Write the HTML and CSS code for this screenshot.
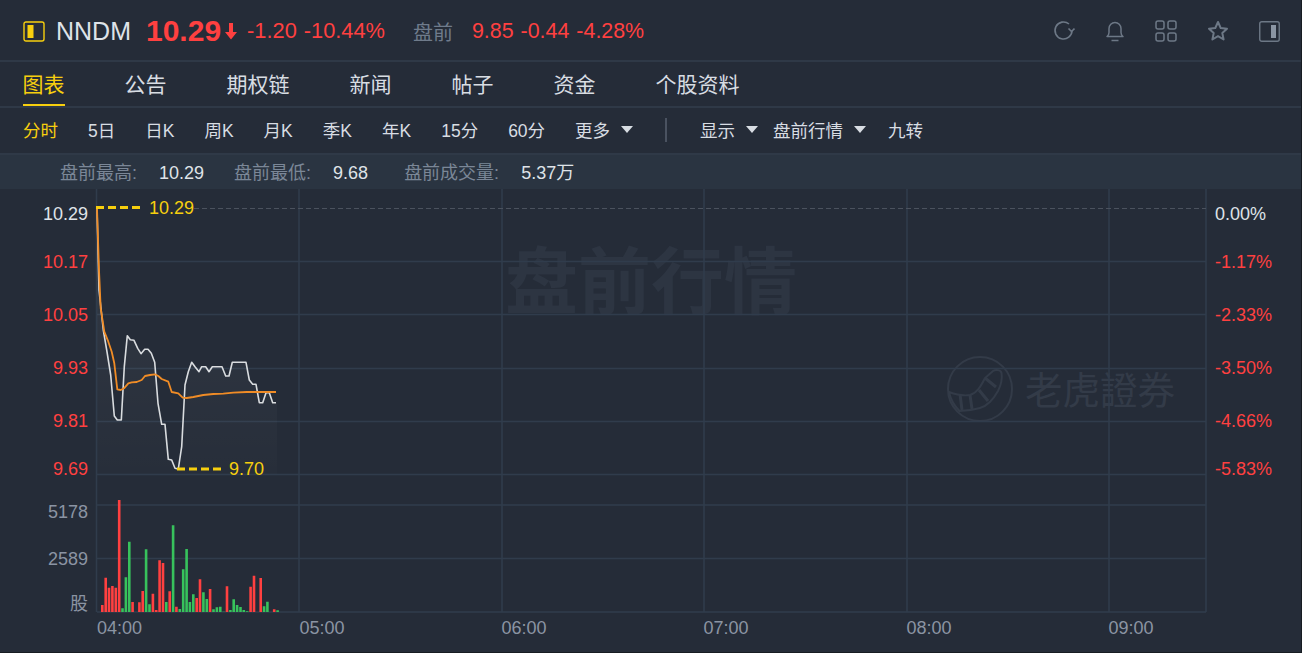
FILE: index.html
```html
<!DOCTYPE html>
<html lang="zh">
<head>
<meta charset="utf-8">
<title>NNDM</title>
<link rel="stylesheet" href="styles.css">
</head>
<body>
<div class="app">
  <header class="quote">
    <div class="quote-left">
      <svg class="mark" width="22" height="21" viewBox="0 0 22 21"><rect x="1" y="1" width="20" height="19" rx="2" fill="none" stroke="#f7cf0e" stroke-width="1.4"/><rect x="4.500" y="4" width="6" height="13" fill="#f7cf0e"/></svg>
      <span class="symbol">NNDM</span>
      <span class="price">10.29</span>
      <svg class="down" width="12" height="18" viewBox="0 0 12 18"><path d="M4 1h4v9h4l-6 7.500-6-7.500h4z" fill="#ff4040"/></svg>
      <span class="chg first">-1.20</span>
      <span class="chg">-10.44%</span>
      <span class="pre-label">盘前</span>
      <span class="chg pre">9.85</span>
      <span class="chg pre">-0.44</span>
      <span class="chg pre">-4.28%</span>
    </div>
    <div class="quote-icons">
      <svg width="22" height="22" viewBox="0 0 22 22" fill="none" stroke="#6d7886" stroke-width="1.600"><path d="M19 10.500A8.500 8.500 0 1 1 16 4"/><path d="M15.500 8.500l3 3 3-3" stroke-linejoin="round"/></svg>
      <svg width="20" height="22" viewBox="0 0 20 22" fill="none" stroke="#6d7886" stroke-width="1.500"><path d="M2 16.500c1.500-1 2-2 2-4V8.500a6 6 0 0 1 12 0v4c0 2 .5 3 2 4z" stroke-linejoin="round"/><path d="M6.500 20.500h7"/></svg>
      <svg width="22" height="22" viewBox="0 0 22 22" fill="none" stroke="#6d7886" stroke-width="1.500"><rect x="1" y="1" width="8" height="8" rx="2"/><rect x="13" y="1" width="8" height="8" rx="2"/><rect x="1" y="13" width="8" height="8" rx="2"/><rect x="13" y="13" width="8" height="8" rx="2"/></svg>
      <svg width="22" height="22" viewBox="0 0 22 22" fill="none" stroke="#6d7886" stroke-width="2"><path d="M11 2l2.700 6 6.300.7-4.700 4.300 1.300 6.500-5.600-3.300-5.600 3.300 1.300-6.500L2 8.700 8.300 8z" stroke-linejoin="round"/></svg>
      <svg width="21" height="21" viewBox="0 0 21 21" fill="none"><rect x=".75" y=".75" width="19.500" height="19.500" rx="2" stroke="#6d7886" stroke-width="1.400"/><rect x="12" y="4" width="5" height="13" fill="#8a95a3"/></svg>
    </div>
  </header>

  <nav class="tabs">
    <a class="tab active">图表</a>
    <a class="tab">公告</a>
    <a class="tab">期权链</a>
    <a class="tab">新闻</a>
    <a class="tab">帖子</a>
    <a class="tab">资金</a>
    <a class="tab">个股资料</a>
  </nav>

  <div class="toolbar">
    <span class="tool active">分时</span>
    <span class="tool">5日</span>
    <span class="tool">日K</span>
    <span class="tool">周K</span>
    <span class="tool">月K</span>
    <span class="tool">季K</span>
    <span class="tool">年K</span>
    <span class="tool">15分</span>
    <span class="tool">60分</span>
    <span class="tool drop">更多<i class="tri"></i></span>
    <i class="sep"></i>
    <span class="drop near-a">显示<i class="tri"></i></span>
    <span class="drop near-b">盘前行情<i class="tri"></i></span>
    <span class="tool">九转</span>
  </div>

  <div class="stats">
    <span class="stat"><span class="k">盘前最高:</span><span class="v">10.29</span></span>
    <span class="stat"><span class="k">盘前最低:</span><span class="v">9.68</span></span>
    <span class="stat wide"><span class="k">盘前成交量:</span><span class="v">5.37万</span></span>
  </div>

  <svg class="chart" width="1301" height="463" viewBox="0 189 1301 463">
    <defs>
      <linearGradient id="area" x1="0" y1="0" x2="0" y2="1">
        <stop offset="0" stop-color="#ffffff" stop-opacity=".07"/>
        <stop offset="1" stop-color="#ffffff" stop-opacity=".01"/>
      </linearGradient>
    </defs>

    <text class="wm-big" x="505" y="308">盘前行情</text>
    <g class="wm-logo">
      <circle cx="980" cy="389" r="32"/>
      <path d="M949 392c8 3 15 4 21 3 7-2 11-9 15-17l8-7c3-2 8-1 8.500 2 1 6-1 13-3.500 18-5 9-11 15-18 17-7 2-14 3-20.500 3-5-5-9-12-10.500-19z"/>
      <path class="stripes" d="M960 394l2 16M970 395l2 14M979 390l9 11M985 378l11 9"/>
    </g>
    <text class="wm-small" x="1025" y="404">老虎證券</text>

    <g class="grid">
      <path d="M97 261.500H1206M97 314.500H1206M97 368.500H1206M97 421.500H1206M97 474.500H1206M97 505H1206M97 558.500H1206M97 612H1206"/>
      <path d="M96.500 189V612M299 189V612M502 189V612M704 189V612M907 189V612M1109 189V612M1206 189V612"/>
    </g>
    <path class="top-dash" d="M194 208.500H1206"/>

    <path fill="url(#area)" d="M97 208L99 290L103.300 330L106.700 350L110.700 375L114.300 416L117.300 420L121.300 420L124.300 366.700L127.300 335.700L130.300 339.700L134 340.300L137.700 348.300L141 353.700L144.700 349.300L148 349.300L151.300 353.300L154.700 362.300L158 403.300L161.700 424.300L165 424.300L168.300 459.300L171.700 460L175 468.300L178.300 469L181.700 446.700L185 385L188.300 371.700L191.700 362.300L195 366.700L199 371.700L201.700 366.700L205.700 366.700L209 371.700L212.300 366.700L222 366.700L225.700 376L229 376L232.300 362.300L246 362.300L249.300 380L252.700 384.300L256 384.300L259.300 402.700L262.700 402.700L266 392.700L269.300 392.700L272.700 402.700L277 402.700V474H97z"/>
    <path class="line-white" d="M97 208L99 290L103.300 330L106.700 350L110.700 375L114.300 416L117.300 420L121.300 420L124.300 366.700L127.300 335.700L130.300 339.700L134 340.300L137.700 348.300L141 353.700L144.700 349.300L148 349.300L151.300 353.300L154.700 362.300L158 403.300L161.700 424.300L165 424.300L168.300 459.300L171.700 460L175 468.300L178.300 469L181.700 446.700L185 385L188.300 371.700L191.700 362.300L195 366.700L199 371.700L201.700 366.700L205.700 366.700L209 371.700L212.300 366.700L222 366.700L225.700 376L229 376L232.300 362.300L246 362.300L249.300 380L252.700 384.300L256 384.300L259.300 402.700L262.700 402.700L266 392.700L269.300 392.700L272.700 402.700L276 402.700"/>
    <path class="line-orange" d="M97 208.300L99 270L100.700 308.300L104.300 331.700L108.300 341.700L111.700 351.700L114.300 363.300L117.300 389.300L120.700 390L124 388.300L128.300 383.300L131.700 382.300L136.700 382L141.700 380L145 376L150 375L155 374.300L158.300 376L161.700 379L168.300 381.700L171.700 392L178.300 393.300L182.700 397.700L186.700 398L193.300 397L203.300 395L213.300 394L223.300 393.700L233.300 392.700L246.700 392L276 392"/>

    <path class="dash-y" d="M96 207.500H140M177 469H221"/>
    <text class="ax yellow" x="149" y="213.500">10.29</text>
    <text class="ax yellow" x="229" y="475">9.70</text>

    <path class="vol-red" d="M102.300 605V612M105.700 577.700V612M109 587.700V612M112.400 586V612M115.800 587.700V612M119.200 500V612M132.600 602V612M139.400 602.300V612M142.700 591V612M152.900 593.700V612M156.200 610V612M159.600 560.300V612M163 563V612M169.700 591.300V612M176.400 606.700V612M196.700 598V612M200 579.300V612M210.100 589V612M227 586.300V612M250.600 586.700V612M254 575.700V612M260.700 578V612M274.200 609.300V612"/>
    <path class="vol-green" d="M122.500 608.300V612M125.900 577.300V612M129.300 541.700V612M146.100 549.300V612M149.500 604.300V612M166.300 602V612M173.100 525.300V612M179.800 609V612M183.200 569.300V612M186.600 549V612M189.900 602V612M193.300 594.300V612M203.400 592.300V612M206.800 599V612M213.500 609.300V612M216.900 607.300V612M220.300 606.700V612M223.600 611.700V612M230.400 610V612M233.700 599.300V612M237.100 605V612M240.500 607V612M243.800 610V612M247.200 611.300V612M264.100 606.300V612M267.400 601.700V612M277.600 610.300V612"/>

    <g class="ax end">
      <text class="white" x="88" y="220">10.29</text>
      <text class="red" x="88" y="268">10.17</text>
      <text class="red" x="88" y="321">10.05</text>
      <text class="red" x="88" y="374">9.93</text>
      <text class="red" x="88" y="427">9.81</text>
      <text class="red" x="88" y="475">9.69</text>
      <text class="gray" x="88" y="518">5178</text>
      <text class="gray" x="88" y="565">2589</text>
      <text class="gray" x="88" y="610">股</text>
    </g>
    <g class="ax">
      <text class="white" x="1215" y="220">0.00%</text>
      <text class="red" x="1215" y="268">-1.17%</text>
      <text class="red" x="1215" y="321">-2.33%</text>
      <text class="red" x="1215" y="374">-3.50%</text>
      <text class="red" x="1215" y="427">-4.66%</text>
      <text class="red" x="1215" y="475">-5.83%</text>
    </g>
    <g class="ax mid gray">
      <text x="119.500" y="634">04:00</text>
      <text x="322" y="634">05:00</text>
      <text x="524" y="634">06:00</text>
      <text x="726" y="634">07:00</text>
      <text x="929" y="634">08:00</text>
      <text x="1131" y="634">09:00</text>
    </g>
  </svg>
</div>
</body>
</html>
```

FILE: styles.css
```css
* { box-sizing: border-box; }
html, body { margin: 0; padding: 0; background: #252c38; }
body { overflow: hidden; font-family: "Liberation Sans", "Noto Sans CJK SC", sans-serif; }
.app {
  width: 1302px;
  height: 653px;
  display: flex;
  flex-direction: column;
  background: #252c38;
  border-right: 1px solid #171c22;
  border-bottom: 1px solid #171c22;
}

.quote {
  height: 62px;
  flex: none;
  display: flex;
  align-items: center;
  justify-content: space-between;
  padding: 0 21px 0 23px;
  border-bottom: 2px solid #2f3947;
}
.quote-left { display: flex; align-items: center; padding-top: 2px; }
.mark { margin-right: 11px; }
.symbol { font-size: 25px; color: #dfe3e8; margin-right: 15px; }
.price { font-size: 30px; font-weight: 700; color: #ff4040; margin-right: 4px; }
.down { margin-right: 10px; }
.chg { font-size: 21.800px; color: #ff4040; margin-right: 7px; }
.chg.pre { font-size: 21.400px; }
.pre-label { font-size: 20px; color: #6f7b8b; margin-left: 21px; margin-right: 19px; }
.quote-icons { display: flex; align-items: center; gap: 30px; padding-top: 2px; }

.tabs {
  height: 46px;
  flex: none;
  display: flex;
  gap: 60px;
  padding: 0 0 0 22.500px;
  border-bottom: 2px solid #2f3947;
}
.tab {
  font-size: 21px;
  line-height: 40px;
  height: 44px;
  color: #d8dde3;
  padding-top: 3px;
}
.tab.active { color: #f7cf0e; border-bottom: 2px solid #f7cf0e; }

.toolbar {
  height: 47px;
  flex: none;
  display: flex;
  align-items: center;
  gap: 30px;
  padding: 0 0 2px 23px;
  font-size: 17.500px;
  color: #d8dde3;
  border-bottom: 2px solid #2f3947;
}
.tool.active { color: #f7cf0e; }
.drop { display: flex; align-items: center; }
.tri {
  width: 0;
  height: 0;
  margin-left: 11px;
  border-left: 6px solid transparent;
  border-right: 6px solid transparent;
  border-top: 7px solid #d8dde3;
}
.sep { width: 2px; height: 24px; background: #4a5260; margin: 0 3px 0 2px; }
.near-a { margin-right: -15px; }
.near-b { margin-right: -8px; }

.stats {
  height: 34px;
  flex: none;
  display: flex;
  align-items: center;
  gap: 30px;
  padding: 0 0 2px 60px;
  background: #2a3441;
  font-size: 18px;
}
.stat { display: flex; align-items: baseline; gap: 22px; }
.stat.wide { margin-left: 6px; }
.k { color: #7b8797; }
.v { color: #dfe3e8; }

.chart { display: block; flex: none; }
.grid path { fill: none; stroke: #303c4c; stroke-width: 1.500; }
.top-dash { fill: none; stroke: #4b525e; stroke-width: 1.200; stroke-dasharray: 5 3; }
.line-white { fill: none; stroke: #d9dcdf; stroke-width: 1.600; stroke-linejoin: round; }
.line-orange { fill: none; stroke: #f08c26; stroke-width: 1.800; stroke-linejoin: round; }
.dash-y { fill: none; stroke: #f7cf0e; stroke-width: 3; stroke-dasharray: 8 4; }
.vol-red { fill: none; stroke: #ff4040; stroke-width: 2.600; }
.vol-green { fill: none; stroke: #37c25c; stroke-width: 2.600; }

.ax text, text.ax { font-size: 18px; }
.end text { text-anchor: end; }
.mid text { text-anchor: middle; }
.white { fill: #dfe3e8; }
.red { fill: #ff4040; }
.gray text, text.gray { fill: #8b94a3; }
.yellow { fill: #f7cf0e; }
.wm-big { font-size: 73px; font-weight: 700; fill: #2d3542; }
.wm-small { font-size: 37.500px; fill: #333b48; }
.wm-logo { fill: none; stroke: #333b48; stroke-width: 2; }
.stripes { stroke-width: 3; }
```
